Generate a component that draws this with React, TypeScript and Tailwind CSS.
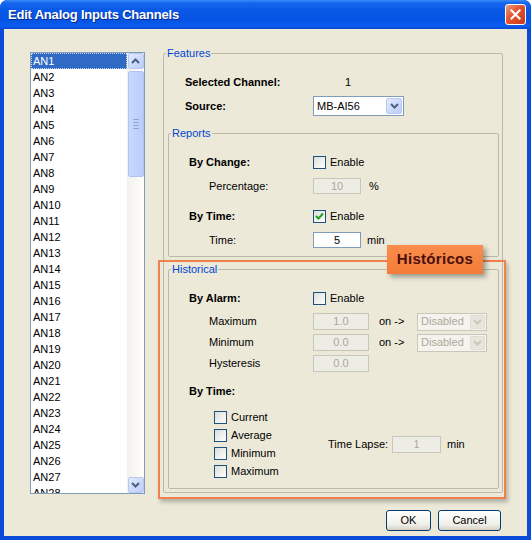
import { ReactNode } from 'react';

const channels = Array.from({ length: 28 }, (_, i) => `AN${i + 1}`);

function Chevron({ up, color = '#4d6185' }: { up?: boolean; color?: string }) {
  return (
    <svg width="9" height="6" viewBox="0 0 9 6">
      <polyline
        points={up ? '1,5 4.5,1.5 8,5' : '1,1 4.5,4.5 8,1'}
        fill="none"
        stroke={color}
        strokeWidth="2"
      />
    </svg>
  );
}

function CheckBox({ checked }: { checked?: boolean }) {
  return (
    <span className="w-[13px] h-[13px] border border-[#1c5180] bg-[linear-gradient(135deg,#dcdcd7,#ffffff)] flex items-center justify-center shrink-0">
      {checked && (
        <svg width="9" height="9" viewBox="0 0 9 9">
          <polyline points="1,4 3.5,6.5 8,1.5" fill="none" stroke="#21a121" strokeWidth="2" />
        </svg>
      )}
    </span>
  );
}

function Field({ value, w, h = 16, disabled }: { value: string; w: number; h?: number; disabled?: boolean }) {
  return (
    <div
      style={{ width: w, height: h }}
      className={
        disabled
          ? 'border border-[#c9c7ba] bg-[#eeede5] text-[#aca899] flex items-center justify-center'
          : 'border border-[#7f9db9] bg-white text-black flex items-center justify-center'
      }
    >
      {value}
    </div>
  );
}

function Group({ title, className, children }: { title: string; className: string; children: ReactNode }) {
  return (
    <fieldset className={`border border-[#bdb9a9] rounded-[2px] p-0 ${className}`}>
      <legend className="ml-[2px] px-[1px] text-[#0046d5] leading-[13px]">{title}</legend>
      {children}
    </fieldset>
  );
}

function XpButton({ label, w }: { label: string; w: number }) {
  return (
    <div
      style={{ width: w }}
      className="h-[21px] border border-[#003c74] rounded-[3px] bg-[linear-gradient(to_bottom,#ffffff,#f0f0ea_70%,#d6d0c5)] flex items-center justify-center text-black"
    >
      {label}
    </div>
  );
}

export default function App() {
  return (
    <div className="w-[531px] h-[540px] bg-[#0a4bd8] rounded-t-[7px] flex flex-col font-['Liberation_Sans',Arial,sans-serif] text-[11px] text-black overflow-hidden">
      {/* title bar */}
      <div className="h-[29px] shrink-0 rounded-t-[7px] bg-[linear-gradient(to_bottom,#3d8af7_0%,#1667f0_10%,#0a58e6_35%,#0554e3_70%,#0a5cf0_90%,#0848d0_100%)] flex items-center justify-between pl-[8px] pr-[5px]">
        <span className="text-white font-bold text-[13px] tracking-[-0.2px] [text-shadow:1px_1px_0_#0a2a8a]">
          Edit Analog Inputs Channels
        </span>
        <div className="w-[21px] h-[21px] rounded-[3px] border border-white bg-[linear-gradient(135deg,#f09a7e,#e2532c_45%,#c8391a)] flex items-center justify-center">
          <svg width="11" height="11" viewBox="0 0 11 11">
            <path d="M1.5 1.5 L9.5 9.5 M9.5 1.5 L1.5 9.5" stroke="white" strokeWidth="2.2" strokeLinecap="square" />
          </svg>
        </div>
      </div>

      {/* body */}
      <div className="relative flex-1 mx-[4px] mb-[4px] bg-[#ece9d8] pl-[26px] pt-[18px] pr-[26px] flex flex-col">
        <div className="flex items-start">
          {/* channel list */}
          <div className="mt-[5px] w-[115px] h-[442px] border border-[#7f9db9] bg-white flex overflow-hidden shrink-0">
            <div className="flex-1 overflow-hidden">
              {channels.map((c, i) => (
                <div
                  key={c}
                  className={
                    i === 0
                      ? 'h-[16px] leading-[14px] pl-[1px] bg-[#316ac5] text-white border border-dotted border-[#c9d8f0]'
                      : 'h-[16px] leading-[16px] pl-[2px]'
                  }
                >
                  {c}
                </div>
              ))}
            </div>
            <div className="w-[17px] h-full bg-[linear-gradient(to_right,#f3f1ec,#fefefb)] flex flex-col items-center">
              <div className="w-[16px] h-[16px] mt-[0px] rounded-[2px] border border-[#b8c9ef] bg-[linear-gradient(135deg,#e2eafe,#bacdf8)] flex items-center justify-center">
                <Chevron up />
              </div>
              <div className="w-[16px] h-[106px] mt-[2px] rounded-[2px] border border-[#b0c4f3] bg-[linear-gradient(to_right,#c9d8fc,#b9cdfa)] flex flex-col items-center justify-center gap-[2px]">
                <div className="w-[6px] h-[1px] bg-[#8ea6e0]" />
                <div className="w-[6px] h-[1px] bg-[#8ea6e0]" />
                <div className="w-[6px] h-[1px] bg-[#8ea6e0]" />
                <div className="w-[6px] h-[1px] bg-[#8ea6e0]" />
              </div>
              <div className="flex-1" />
              <div className="w-[16px] h-[16px] mb-[0px] rounded-[2px] border border-[#b8c9ef] bg-[linear-gradient(135deg,#e2eafe,#bacdf8)] flex items-center justify-center">
                <Chevron />
              </div>
            </div>
          </div>

          {/* features */}
          <Group title="Features" className="ml-[18px] w-[340px] h-[446px] shrink-0">
            <div className="mt-[13px] h-[18px] flex items-center pl-[21px]">
              <span className="w-[128px] font-bold">Selected Channel:</span>
              <span className="ml-[32px]">1</span>
            </div>
            <div className="mt-[5px] h-[20px] flex items-center pl-[21px]">
              <span className="w-[128px] font-bold">Source:</span>
              <div className="w-[91px] h-[20px] border border-[#7f9db9] bg-white flex items-center justify-between pl-[3px] pr-[1px]">
                <span>MB-AI56</span>
                <div className="w-[16px] h-[16px] rounded-[2px] border border-[#b8c9ef] bg-[linear-gradient(135deg,#e2eafe,#bacdf8)] flex items-center justify-center">
                  <Chevron />
                </div>
              </div>
            </div>

            {/* reports */}
            <Group title="Reports" className="mt-[11px] ml-[4px] w-[331px] h-[130px]">
              <div className="mt-[14px] h-[16px] flex items-center pl-[20px]">
                <span className="w-[124px] font-bold">By Change:</span>
                <CheckBox />
                <span className="ml-[4px]">Enable</span>
              </div>
              <div className="mt-[8px] h-[16px] flex items-center pl-[40px]">
                <span className="w-[104px]">Percentage:</span>
                <Field value="10" w={48} disabled />
                <span className="ml-[8px]">%</span>
              </div>
              <div className="mt-[14px] h-[16px] flex items-center pl-[20px]">
                <span className="w-[124px] font-bold">By Time:</span>
                <CheckBox checked />
                <span className="ml-[4px]">Enable</span>
              </div>
              <div className="mt-[8px] h-[16px] flex items-center pl-[40px]">
                <span className="w-[104px]">Time:</span>
                <Field value="5" w={48} />
                <span className="ml-[6px]">min</span>
              </div>
            </Group>

            {/* historical */}
            <Group title="Historical" className="mt-[6px] ml-[4px] w-[331px] h-[226px]">
              <div className="mt-[14px] h-[16px] flex items-center pl-[20px]">
                <span className="w-[124px] font-bold">By Alarm:</span>
                <CheckBox />
                <span className="ml-[4px]">Enable</span>
              </div>
              {[
                ['Maximum', '1.0', true],
                ['Minimum', '0.0', true],
                ['Hysteresis', '0.0', false],
              ].map(([label, val, sel], i) => (
                <div key={label as string} className={`${i === 0 ? 'mt-[7px]' : 'mt-[4px]'} h-[17px] flex items-center pl-[40px]`}>
                  <span className="w-[104px]">{label}</span>
                  <Field value={val as string} w={56} h={17} disabled />
                  {sel && (
                    <>
                      <span className="ml-[10px] w-[38px]">on -&gt;</span>
                      <div className="w-[70px] h-[18px] border border-[#c9c7ba] bg-[#f4f3ee] flex items-center justify-between pl-[3px] pr-[1px] text-[#aca899]">
                        <span>Disabled</span>
                        <div className="w-[15px] h-[14px] rounded-[2px] bg-[#e8e6dc] border border-[#e0ded3] flex items-center justify-center">
                          <Chevron color="#c9c7ba" />
                        </div>
                      </div>
                    </>
                  )}
                </div>
              ))}
              <div className="mt-[11px] h-[16px] flex items-center pl-[20px]">
                <span className="font-bold">By Time:</span>
              </div>
              <div className="mt-[9px] flex items-center pl-[45px]">
                <div className="w-[114px] flex flex-col">
                  {['Current', 'Average', 'Minimum', 'Maximum'].map((c) => (
                    <div key={c} className="h-[18px] flex items-center">
                      <CheckBox />
                      <span className="ml-[4px]">{c}</span>
                    </div>
                  ))}
                </div>
                <span className="w-[64px]">Time Lapse:</span>
                <Field value="1" w={49} h={17} disabled />
                <span className="ml-[6px]">min</span>
              </div>
            </Group>
          </Group>
        </div>

        {/* buttons */}
        <div className="mt-[16px] flex justify-end gap-[7px]">
          <XpButton label="OK" w={45} />
          <XpButton label="Cancel" w={63} />
        </div>

        {/* annotation overlay */}
        <div className="absolute left-[154px] top-[231px] w-[348px] h-[239px] border-2 border-[#f08050] shadow-[2px_3px_4px_rgba(0,0,0,0.25)] pointer-events-none" />
        <div className="absolute left-[383px] top-[216px] w-[96px] h-[29px] bg-[linear-gradient(to_bottom,#f98d4c,#f47c38)] shadow-[3px_3px_5px_rgba(0,0,0,0.35)] flex items-center justify-center">
          <span className="font-bold text-[15px] text-[#4a1010] tracking-[0.3px]">Históricos</span>
        </div>
      </div>
    </div>
  );
}
